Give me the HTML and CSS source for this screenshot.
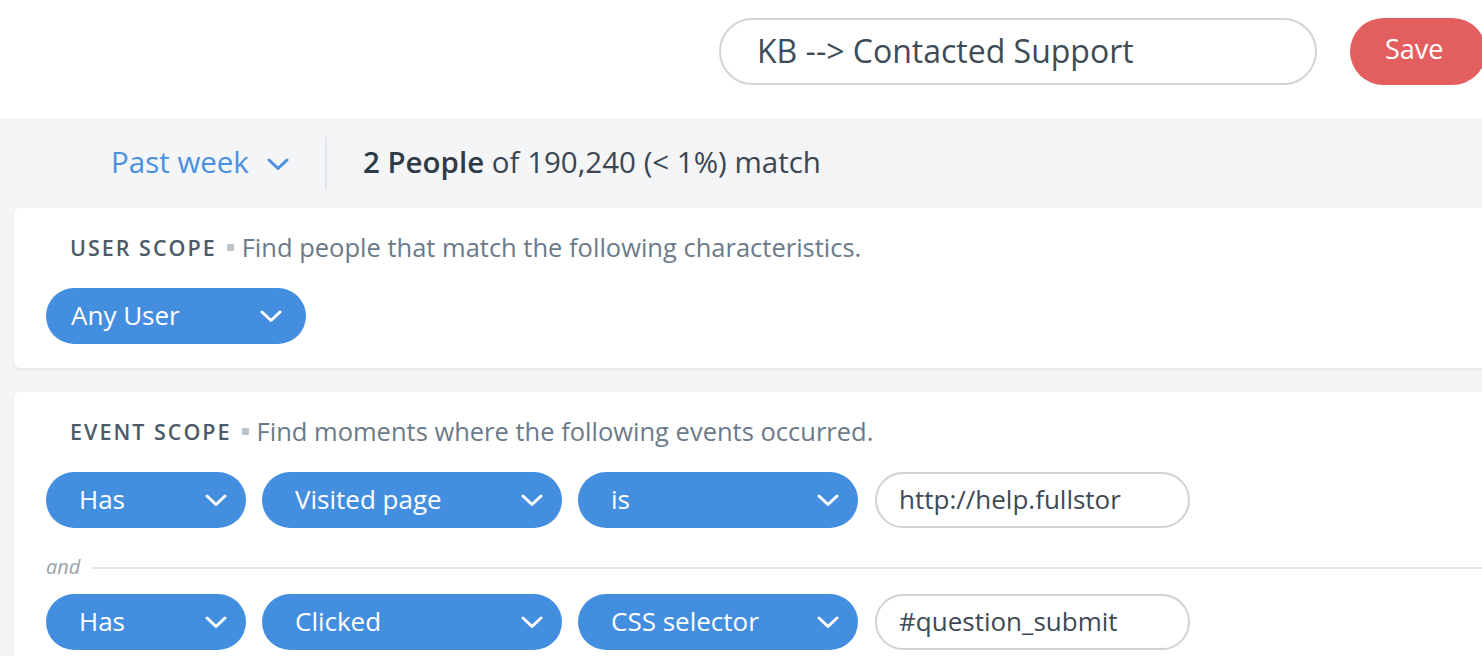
FILE: index.html
```html
<!DOCTYPE html>
<html>
<head>
<meta charset="utf-8">
<link rel="stylesheet" href="styles.css">
</head>
<body>
<div class="page">
  <header class="topbar">
    <div class="title-input">KB --&gt; Contacted Support</div>
    <button class="save-btn">Save</button>
  </header>
  <main class="content">
    <div class="stats">
      <div class="range">Past week
        <svg class="chev-blue" width="22" height="13" viewBox="0 0 22 13"><path d="M2 2 L11 10.5 L20 2" fill="none" stroke="#4a90e2" stroke-width="3" stroke-linecap="round" stroke-linejoin="round"/></svg>
      </div>
      <div class="divider"></div>
      <div class="count"><b>2 People</b> of 190,240 (&lt; 1%) match</div>
    </div>

    <section class="card card-user">
      <div class="heading"><span class="label">USER SCOPE</span><span class="dot"></span><span class="desc">Find people that match the following characteristics.</span></div>
      <div class="row">
        <div class="pill w-any"><span>Any User</span><svg class="chev" width="22" height="13" viewBox="0 0 22 13"><path d="M2 2 L11 10.5 L20 2" fill="none" stroke="#fff" stroke-width="3" stroke-linecap="round" stroke-linejoin="round"/></svg></div>
      </div>
    </section>

    <section class="card card-event">
      <div class="heading"><span class="label">EVENT SCOPE</span><span class="dot"></span><span class="desc">Find moments where the following events occurred.</span></div>
      <div class="row">
        <div class="pill w-has"><span>Has</span><svg class="chev" width="22" height="13" viewBox="0 0 22 13"><path d="M2 2 L11 10.5 L20 2" fill="none" stroke="#fff" stroke-width="3" stroke-linecap="round" stroke-linejoin="round"/></svg></div>
        <div class="pill w-event"><span>Visited page</span><svg class="chev" width="22" height="13" viewBox="0 0 22 13"><path d="M2 2 L11 10.5 L20 2" fill="none" stroke="#fff" stroke-width="3" stroke-linecap="round" stroke-linejoin="round"/></svg></div>
        <div class="pill w-op"><span>is</span><svg class="chev" width="22" height="13" viewBox="0 0 22 13"><path d="M2 2 L11 10.5 L20 2" fill="none" stroke="#fff" stroke-width="3" stroke-linecap="round" stroke-linejoin="round"/></svg></div>
        <div class="value-input">http://help.fullstor</div>
      </div>
      <div class="and-sep"><span>and</span><div class="line"></div></div>
      <div class="row">
        <div class="pill w-has"><span>Has</span><svg class="chev" width="22" height="13" viewBox="0 0 22 13"><path d="M2 2 L11 10.5 L20 2" fill="none" stroke="#fff" stroke-width="3" stroke-linecap="round" stroke-linejoin="round"/></svg></div>
        <div class="pill w-event"><span>Clicked</span><svg class="chev" width="22" height="13" viewBox="0 0 22 13"><path d="M2 2 L11 10.5 L20 2" fill="none" stroke="#fff" stroke-width="3" stroke-linecap="round" stroke-linejoin="round"/></svg></div>
        <div class="pill w-op"><span>CSS selector</span><svg class="chev" width="22" height="13" viewBox="0 0 22 13"><path d="M2 2 L11 10.5 L20 2" fill="none" stroke="#fff" stroke-width="3" stroke-linecap="round" stroke-linejoin="round"/></svg></div>
        <div class="value-input">#question_submit</div>
      </div>
    </section>
  </main>
</div>
</body>
</html>
```
FILE: styles.css
```css
html, body {
  margin: 0;
  padding: 0;
  overflow: hidden;
  width: 1482px;
  height: 656px;
  background: #f4f5f7;
  font-family: "Open Sans", Lato, sans-serif;
}

.page {
  width: 1482px;
}

.topbar {
  height: 118px;
  background: #ffffff;
  display: flex;
  align-items: flex-start;
  justify-content: flex-end;
  padding-top: 18px;
  box-sizing: border-box;
  overflow: hidden;
}

.title-input {
  width: 598px;
  height: 67px;
  box-sizing: border-box;
  border: 2px solid #cfd5da;
  border-radius: 34px;
  display: flex;
  align-items: center;
  padding-left: 36px;
  padding-bottom: 3px;
  font-size: 32px;
  color: #3d4c57;
  margin-right: 33px;
}

.save-btn {
  flex: 0 0 auto;
  width: 136px;
  height: 67px;
  margin-right: -4px;
  border: none;
  border-radius: 34px;
  background: #e35e5e;
  color: #ffffff;
  font-family: "Open Sans", Lato, sans-serif;
  font-size: 27px;
  text-align: left;
  padding-left: 35px;
  padding-bottom: 8px;
}

.content {
  padding-left: 14px;
}

.stats {
  height: 90px;
  display: flex;
  align-items: center;
}

.range {
  margin-left: 97px;
  color: #4a90e2;
  font-size: 29.5px;
  display: flex;
  align-items: center;
  padding-bottom: 3px;
}

.chev-blue {
  margin-left: 18px;
  margin-top: 6px;
}

.divider {
  width: 2px;
  height: 52px;
  background: #e1e4e8;
  margin-left: 36px;
  margin-right: 36px;
}

.count {
  font-size: 29.5px;
  color: #3a4652;
  padding-bottom: 3px;
}

.count b {
  color: #2e3b47;
  font-weight: 600;
}

.card {
  background: #ffffff;
  border-radius: 6px 0 0 6px;
  box-shadow: 0 2px 3px rgba(0, 0, 0, 0.06);
  margin-right: -10px;
  padding-left: 32px;
}

.card-user {
  height: 160px;
  box-sizing: border-box;
  padding-top: 26px;
}

.card-event {
  margin-top: 24px;
  padding-top: 26px;
  height: 300px;
  box-sizing: border-box;
}

.heading {
  display: flex;
  align-items: center;
  height: 26px;
  padding-left: 24px;
}

.label {
  font-size: 21.5px;
  font-weight: 600;
  letter-spacing: 2px;
  color: #4b5b69;
}

.dot {
  width: 7px;
  height: 7px;
  background: #bcc4cb;
  border-radius: 1px;
  margin: 0 8px 0 10px;
}

.desc {
  font-size: 25.5px;
  color: #6b7a88;
}

.row {
  display: flex;
  align-items: center;
  gap: 16px;
  margin-top: 28px;
}

.pill {
  height: 56px;
  border-radius: 28px;
  background: #448ee0;
  color: #ffffff;
  font-size: 26px;
  display: flex;
  align-items: center;
  justify-content: space-between;
  box-sizing: border-box;
  padding-left: 33px;
  padding-right: 19px;
}

.pill span {
  padding-bottom: 3px;
}

.w-any { width: 260px; padding-left: 25px; padding-right: 24px; }
.w-has { width: 200px; }
.w-event { width: 300px; }
.w-op { width: 280px; }

.value-input {
  width: 315px;
  height: 56px;
  box-sizing: border-box;
  border: 2px solid #cdd3d8;
  border-radius: 28px;
  margin-left: 1px;
  display: flex;
  align-items: center;
  padding-left: 22px;
  padding-bottom: 3px;
  font-size: 26px;
  color: #3d4a55;
  overflow: hidden;
  white-space: nowrap;
}

.and-sep {
  display: flex;
  align-items: center;
  margin-top: 10px;
  height: 56px;
  box-sizing: border-box;
  padding-top: 2px;
  padding-bottom: 2px;
}

.card-event .and-sep + .row {
  margin-top: 0;
}

.and-sep span {
  font-style: italic;
  font-size: 20px;
  color: #9aa3ab;
}

.and-sep .line {
  flex: 1;
  height: 2px;
  background: #e3e7eb;
  margin-left: 12px;
  margin-top: 4px;
}
```
